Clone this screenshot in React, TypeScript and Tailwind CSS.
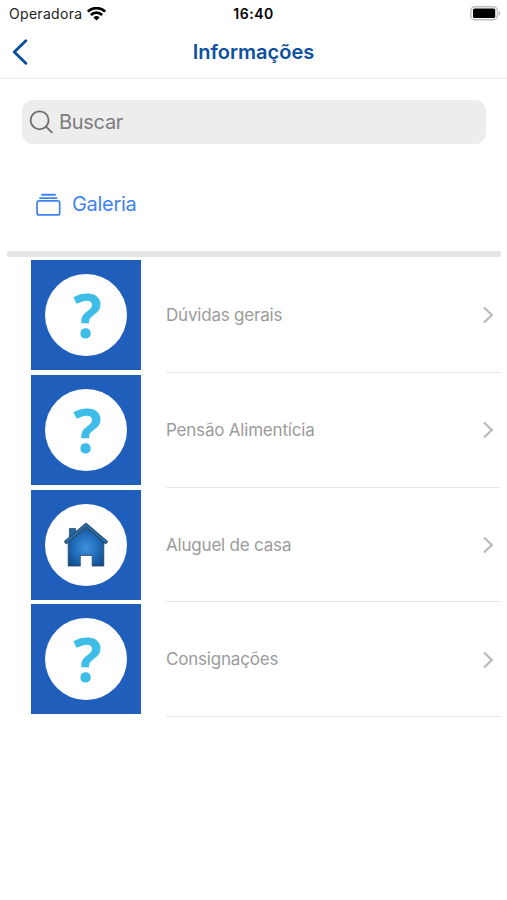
import type { ReactNode } from "react";

type Topic = {
  id: string;
  title: string;
  icon: "question" | "house";
};

const topics: Topic[] = [
  { id: "duvidas", title: "Dúvidas gerais", icon: "question" },
  { id: "pensao", title: "Pensão Alimentícia", icon: "question" },
  { id: "aluguel", title: "Aluguel de casa", icon: "house" },
  { id: "consignacoes", title: "Consignações", icon: "question" },
];

function WifiIcon() {
  return (
    <svg aria-hidden="true" className="ml-[5px] h-[14px] w-[19px]" viewBox="0 0 19 14" fill="none" stroke="#000" strokeWidth={2.7}>
      <path d="M.9 4.6a12.3 12.3 0 0 1 17.2 0" />
      <path d="M3.9 8a8 8 0 0 1 11.2 0" />
      <path d="M6.4 10.5a4.6 4.6 0 0 1 6.2 0L9.5 13.5Z" fill="#000" stroke="none" />
    </svg>
  );
}

function BatteryIcon() {
  return (
    <svg aria-hidden="true" className="h-[15px] w-[31px]" viewBox="0 0 31 15">
      <rect x="0.8" y="0.8" width="26.6" height="13" rx="4" fill="#fff" stroke="#bdbdbd" strokeWidth={1.4} />
      <rect x="3" y="2.6" width="22.2" height="9.4" rx="1.6" fill="#000" />
      <path d="M28.8 5.2c1.7.5 1.7 3.8 0 4.3Z" fill="#aaa" />
    </svg>
  );
}

function StatusBar() {
  return (
    <div className="grid h-7 grid-cols-3 items-center pl-[6px] pr-[6px] pb-px text-[14px] text-[#222]">
      <div className="flex items-center pl-[3px]">
        <span className="tracking-[0.3px]">Operadora</span>
        <WifiIcon />
      </div>
      <span className="text-center font-semibold tracking-[0.5px] text-black">16:40</span>
      <div className="flex justify-end">
        <BatteryIcon />
      </div>
    </div>
  );
}

function NavBar() {
  return (
    <header className="grid h-[51px] grid-cols-[60px_1fr_60px] items-center border-b border-[#ededed] pb-[2px]">
      <button aria-label="Voltar" className="pl-3" type="button">
        <svg aria-hidden="true" className="h-[26px] w-4" viewBox="0 0 16 26" fill="none" stroke="#0b4f9f" strokeWidth={3} strokeLinecap="round" strokeLinejoin="round">
          <path d="M13.8 1.8 2.3 13l11.5 11.2" />
        </svg>
      </button>
      <h1 className="text-center text-[20px] font-semibold text-[#0d509f]">Informações</h1>
    </header>
  );
}

function SearchField() {
  return (
    <label className="ml-[22px] mr-[21px] mt-[21px] flex h-[44px] items-center gap-[6px] rounded-[11px] bg-[#ededed] pl-[7px]">
      <svg aria-hidden="true" className="h-6 w-6 shrink-0" viewBox="0 0 24 24" fill="none" stroke="#6e6e6e" strokeWidth={1.8} strokeLinecap="round">
        <circle cx="10.6" cy="10.3" r="9" />
        <path d="m17 16.7 5.8 5.6" />
      </svg>
      <input
        className="w-full bg-transparent text-[20px] tracking-[-0.3px] outline-none placeholder:text-[#7d7d7d]"
        placeholder="Buscar"
        type="text"
      />
    </label>
  );
}

function GalleryLink() {
  return (
    <button className="ml-9 mt-[44px] flex h-8 items-center gap-[11px] text-[20px] tracking-[-0.3px] text-[#3f83ee]" type="button">
      <svg aria-hidden="true" className="h-6 w-[25px]" viewBox="0 0 25 24" fill="none" stroke="currentColor">
        <path d="M6 2.8h13M4 6.1h16.6" strokeWidth={1.9} strokeLinecap="round" />
        <rect x="1.1" y="8.9" width="22.6" height="14" rx="2" strokeWidth={1.7} />
      </svg>
      <span>Galeria</span>
    </button>
  );
}

function HouseIcon() {
  return (
    <svg aria-hidden="true" className="h-[44px] w-[46px]" viewBox="0 0 46 44">
      <defs>
        <radialGradient id="house-wall" cx="0.5" cy="0.52" r="0.66">
          <stop offset="0" stopColor="#3f92df" />
          <stop offset="0.5" stopColor="#226fbc" />
          <stop offset="1" stopColor="#0d4684" />
        </radialGradient>
      </defs>
      <path d="M6.4 16V5.6h6.2V12Z" fill="#2565a3" stroke="#294d70" strokeWidth={0.8} />
      <path d="M5.2 19 23 4.8 40.8 19v24H29.2V32.4H17.3V43H5.2Z" fill="url(#house-wall)" stroke="#28445e" strokeWidth={0.8} />
      <path d="M2 20 23 2l21 18" fill="none" stroke="#24435f" strokeWidth={3.8} />
      <path d="M2.4 19.6 23 2l20.6 17.6" fill="none" stroke="#2b6cab" strokeWidth={2.3} />
    </svg>
  );
}

function TopicBadge({ children }: { children: ReactNode }) {
  return (
    <div className="flex h-[110px] w-[110px] shrink-0 items-center justify-center bg-[#1f5fbb]">
      <div className="flex h-[82px] w-[82px] items-center justify-center rounded-full bg-white">{children}</div>
    </div>
  );
}

function TopicRow({ topic }: { topic: Topic }) {
  return (
    <li className="flex h-[114.75px] pl-[31px] pr-[7px] pt-[2px]">
      <TopicBadge>
        {topic.icon === "question" ? (
          <span className="pl-[3px] font-['Open_Sans'] text-[60px] leading-[82px] font-bold text-[#3dbde8]">?</span>
        ) : (
          <HouseIcon />
        )}
      </TopicBadge>
      <div className="ml-[25px] flex flex-1 items-center justify-between border-b border-[#e6e6e6] pr-[6px]">
        <span className="text-[17px] tracking-[-0.2px] text-[#9b9b9b]">{topic.title}</span>
        <svg aria-hidden="true" className="mb-px h-[18px] w-3" viewBox="0 0 12 18" fill="none" stroke="#bababa" strokeWidth={2.3}>
          <path d="m2 1.5 7.8 7.5L2 16.5" />
        </svg>
      </div>
    </li>
  );
}

export default function App() {
  return (
    <main className="min-h-screen bg-white font-['Inter',sans-serif]">
      <StatusBar />
      <NavBar />
      <SearchField />
      <GalleryLink />
      <div className="ml-[7px] mr-[6px] mt-[31px] h-[6px] rounded-[2px] bg-[#e5e5e5]" />
      <ul className="pt-px">
        {topics.map((topic) => (
          <TopicRow key={topic.id} topic={topic} />
        ))}
      </ul>
    </main>
  );
}
